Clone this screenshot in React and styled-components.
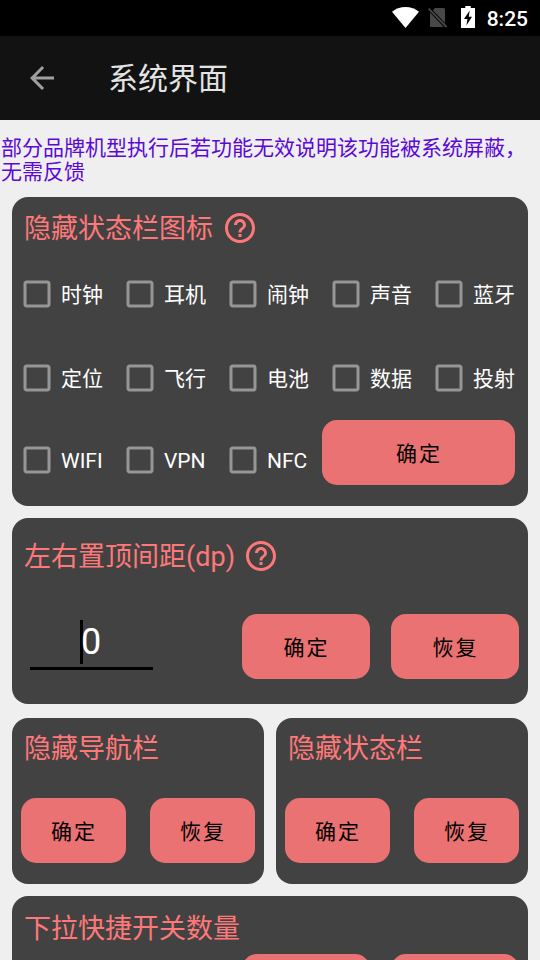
import { useState } from "react";
import styled, { createGlobalStyle } from "styled-components";
import {
  MdArrowBack,
  MdCheckBox,
  MdCheckBoxOutlineBlank,
  MdHelpOutline,
} from "react-icons/md";

const statusIcons = [
  "时钟",
  "耳机",
  "闹钟",
  "声音",
  "蓝牙",
  "定位",
  "飞行",
  "电池",
  "数据",
  "投射",
];
const lastIcons = ["WIFI", "VPN", "NFC"];

function StatusBar() {
  return (
    <Status>
      <svg width="27" height="21" viewBox="0 0 26 21" preserveAspectRatio="none">
        <path d="M13 21 0 4.800C3.600 1.800 8 0 13 0s9.400 1.800 13 4.800z" fill="#fff" />
      </svg>
      <svg width="20" height="21" viewBox="0 0 20 21">
        <path d="M7 1h8.500a1.500 1.500 0 0 1 1.500 1.500V16L4.800 3.200zM2 5.500 15.800 20H3.500A1.500 1.500 0 0 1 2 18.500z" fill="#484848" />
        <path d="M.6 1.600 18.600 20" stroke="#484848" strokeWidth="1.800" />
      </svg>
      <svg width="14" height="22" viewBox="0 0 14 22">
        <path d="M4.300 0h5.400v2H14v20H0V2h4.300z" fill="#fff" />
        <path d="M8.700 4.500 3 13h3.400l-1 6.500L11 10.800H7.700z" fill="#000" />
      </svg>
      <Clock>8:25</Clock>
    </Status>
  );
}

function CheckItem({ label, $shift }) {
  const [checked, setChecked] = useState(false);
  return (
    <Check $shift={$shift} onClick={() => setChecked(!checked)}>
      {checked ? <MdCheckBox size={36} /> : <MdCheckBoxOutlineBlank size={36} />}
      <span>{label}</span>
    </Check>
  );
}

function App() {
  return (
    <Screen>
      <GlobalStyle />
      <StatusBar />
      <Toolbar>
        <MdArrowBack size={36} />
        <h1>系统界面</h1>
      </Toolbar>
      <Notice>部分品牌机型执行后若功能无效说明该功能被系统屏蔽，无需反馈</Notice>
      <Cards>
        <Card $height={309}>
          <Title $top={14}>
            隐藏状态栏图标
            <MdHelpOutline size={36} />
          </Title>
          <CheckGrid>
            {statusIcons.map((label) => (
              <CheckItem key={label} label={label} $shift={-2} />
            ))}
          </CheckGrid>
          <LastRow>
            {lastIcons.map((label) => (
              <CheckItem key={label} label={label} $shift={2} />
            ))}
            <Button $width={193}>确定</Button>
          </LastRow>
        </Card>
        <Card $height={186}>
          <Title $top={21} $gap={8}>
            左右置顶间距(dp)
            <MdHelpOutline size={36} />
          </Title>
          <SpacingRow>
            <Field>
              <Caret />0
            </Field>
            <ButtonRow $gap={21}>
              <Button $width={128}>确定</Button>
              <Button $width={128}>恢复</Button>
            </ButtonRow>
          </SpacingRow>
        </Card>
        <HalfCards>
          {["隐藏导航栏", "隐藏状态栏"].map((title) => (
            <Card key={title} $height={166}>
              <Title $top={13}>{title}</Title>
              <ButtonRow $gap={24} $top={31}>
                <Button $width={105}>确定</Button>
                <Button $width={105}>恢复</Button>
              </ButtonRow>
            </Card>
          ))}
        </HalfCards>
        <Card $height={186}>
          <Title $top={15}>下拉快捷开关数量</Title>
          <ButtonRow $gap={21} $top={7}>
            <Button $width={128}>确定</Button>
            <Button $width={128}>恢复</Button>
          </ButtonRow>
        </Card>
      </Cards>
    </Screen>
  );
}
export default App;

const GlobalStyle = createGlobalStyle`
  * {
    box-sizing: border-box;
  }
  body {
    margin: 0;
    overflow: hidden;
    background: #efefef;
    font-family: Roboto, "Noto Sans CJK SC", sans-serif;
  }
`;
const Screen = styled.div`
  width: 540px;
  height: 960px;
  overflow: hidden;
`;
const Status = styled.div`
  height: 36px;
  background: #000;
  display: flex;
  align-items: center;
  justify-content: flex-end;
  padding: 0 12px 2px 0;
  svg:nth-child(2) {
    margin: 1px 13px 0 9px;
  }
`;
const Clock = styled.span`
  margin: 3px 0 0 12px;
  color: #fff;
  font-size: 21px;
  font-weight: 500;
  line-height: 24px;
`;
const Toolbar = styled.header`
  height: 84px;
  background: #121212;
  display: flex;
  align-items: center;
  padding: 0 24px;
  color: #a0a0a0;
  h1 {
    margin: 2px 0 0 48px;
    color: #e4e4e4;
    font-size: 30px;
    font-weight: 400;
    line-height: 36px;
  }
`;
const Notice = styled.p`
  margin: 0;
  height: 77px;
  padding: 16px 0 0 1px;
  color: #5b09d6;
  font-size: 21px;
  line-height: 24px;
`;
const Cards = styled.main`
  padding: 0 12px;
  display: flex;
  flex-direction: column;
  gap: 12px;
`;
const Card = styled.section`
  height: ${(props) => props.$height}px;
  flex: 1 0 auto;
  border-radius: 16px;
  background: #424242;
  overflow: hidden;
`;
const HalfCards = styled.div`
  display: flex;
  gap: 12px;
  margin-top: 2px;
`;
const Title = styled.h2`
  margin: ${(props) => props.$top}px 0 0;
  height: 36px;
  padding-left: 12px;
  display: flex;
  align-items: center;
  gap: ${(props) => props.$gap || 9}px;
  color: #ff7879;
  font-size: 27px;
  font-weight: 400;
  line-height: 36px;
  white-space: nowrap;
  svg {
    margin-bottom: 2px;
  }
`;
const CheckGrid = styled.div`
  margin-top: 5px;
  padding-left: 7px;
  display: grid;
  grid-template-columns: repeat(5, 103px);
  grid-auto-rows: 84px;
`;
const Check = styled.div`
  display: flex;
  align-items: center;
  gap: 6px;
  color: #fff;
  font-size: 21px;
  white-space: nowrap;
  cursor: pointer;
  span {
    margin-top: ${(props) => props.$shift}px;
  }
  svg {
    flex: none;
    color: #969696;
  }
`;
const LastRow = styled.div`
  height: 65px;
  padding-left: 7px;
  display: grid;
  grid-template-columns: 103px 103px 97px 193px;
  ${Check} {
    padding-top: 14px;
  }
`;
const SpacingRow = styled.div`
  margin-top: 39px;
  display: flex;
  justify-content: space-between;
`;
const Field = styled.div`
  width: 123px;
  height: 50px;
  margin: 6px 0 0 18px;
  padding-right: 2px;
  border-bottom: 3px solid #000;
  display: flex;
  justify-content: center;
  color: #fff;
  font-size: 36px;
  line-height: 44px;
`;
const Caret = styled.span`
  width: 3px;
  height: 44px;
  margin-right: -2px;
  background: #000;
`;
const ButtonRow = styled.div`
  margin-top: ${(props) => props.$top || 0}px;
  padding-right: 9px;
  display: flex;
  justify-content: flex-end;
  gap: ${(props) => props.$gap}px;
`;
const Button = styled.button`
  width: ${(props) => props.$width}px;
  height: 65px;
  padding: 0 0 2px 1px;
  border: none;
  border-radius: 15px;
  background: #eb7272;
  color: #000;
  font-family: inherit;
  font-size: 21px;
  letter-spacing: 1.9px;
  cursor: pointer;
`;
